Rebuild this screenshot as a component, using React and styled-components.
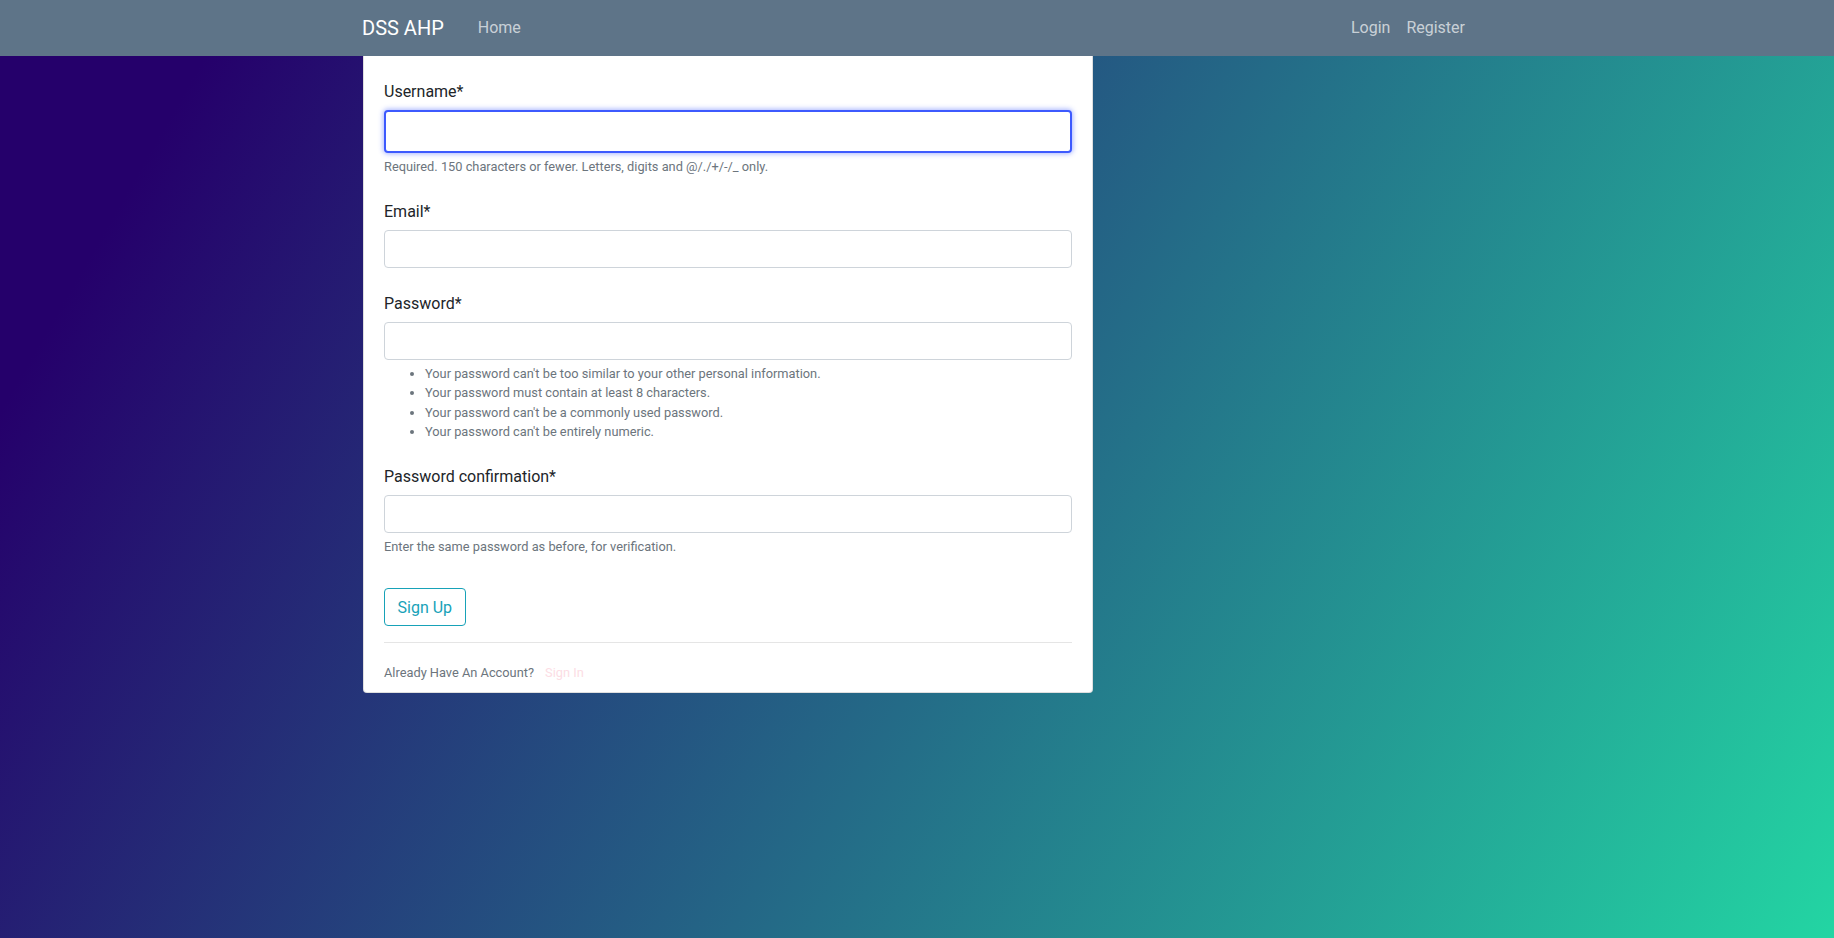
import styled, { createGlobalStyle } from "styled-components";

const GlobalStyle = createGlobalStyle`
    html, body {
        margin: 0;
        padding: 0;
    }

    body {
        min-height: 100vh;
        font-family: Roboto, "Liberation Sans", sans-serif;
        background: linear-gradient(120deg, #25006b 10%, #23d5a3 100%);
        background-attachment: fixed;
        color: #212529;
    }

    * {
        box-sizing: border-box;
    }
`;

const passwordRules = [
    "Your password can't be too similar to your other personal information.",
    "Your password must contain at least 8 characters.",
    "Your password can't be a commonly used password.",
    "Your password can't be entirely numeric.",
];

export default function App() {
    return (
        <>
            <GlobalStyle />
            <NavbarSC>
                <NavInnerSC>
                    <BrandSC href="#">DSS AHP</BrandSC>
                    <NavLinkSC href="#">Home</NavLinkSC>
                    <NavRightSC>
                        <NavLinkSC href="#">Login</NavLinkSC>
                        <NavLinkSC href="#" last>Register</NavLinkSC>
                    </NavRightSC>
                </NavInnerSC>
            </NavbarSC>

            <ContainerSC>
                <CardSC>
                    <form onSubmit={e => e.preventDefault()}>
                        <FormGroupSC>
                            <LabelSC htmlFor="id_username">Username*</LabelSC>
                            <InputSC id="id_username" type="text" focused />
                            <HelpSC>Required. 150 characters or fewer. Letters, digits and @/./+/-/_ only.</HelpSC>
                        </FormGroupSC>

                        <FormGroupSC>
                            <LabelSC htmlFor="id_email">Email*</LabelSC>
                            <InputSC id="id_email" type="email" />
                        </FormGroupSC>

                        <FormGroupSC>
                            <LabelSC htmlFor="id_password1">Password*</LabelSC>
                            <InputSC id="id_password1" type="password" />
                            <RulesSC>
                                {passwordRules.map((rule, i) => (
                                    <li key={i}>{rule}</li>
                                ))}
                            </RulesSC>
                        </FormGroupSC>

                        <FormGroupSC>
                            <LabelSC htmlFor="id_password2">Password confirmation*</LabelSC>
                            <InputSC id="id_password2" type="password" />
                            <HelpSC>Enter the same password as before, for verification.</HelpSC>
                        </FormGroupSC>

                        <SubmitSC type="submit">Sign Up</SubmitSC>
                    </form>

                    <DividerSC />

                    <FooterSC>
                        Already Have An Account? <SignInSC href="#">Sign In</SignInSC>
                    </FooterSC>
                </CardSC>
            </ContainerSC>
        </>
    );
}

const NavbarSC = styled.nav`
    height: 56px;
    background-color: #5e7488;
`;

const NavInnerSC = styled.div`
    width: 1110px;
    height: 100%;
    margin: 0 auto;
    display: flex;
    align-items: center;
`;

const BrandSC = styled.a`
    color: #fff;
    font-size: 20px;
    line-height: 30px;
    text-decoration: none;
    margin-right: 26px;
`;

const NavLinkSC = styled.a`
    color: rgba(255, 255, 255, 0.68);
    font-size: 16px;
    line-height: 24px;
    text-decoration: none;
    padding: 8px;
    padding-right: ${props => props.last ? '7px' : '8px'};
`;

const NavRightSC = styled.div`
    margin-left: auto;
    display: flex;
`;

const ContainerSC = styled.main`
    width: 1110px;
    margin: 0 auto;
    padding-left: 1px;
`;

const CardSC = styled.section`
    width: 730px;
    background-color: #fff;
    border: 1px solid rgba(0, 0, 0, 0.125);
    border-top: none;
    border-radius: 0 0 4px 4px;
    padding: 24px 20px 10px;
`;

const FormGroupSC = styled.div`
    margin-bottom: 24px;
`;

const LabelSC = styled.label`
    display: block;
    font-size: 16px;
    line-height: 24px;
    margin-bottom: 6px;
    color: #212529;
`;

const InputSC = styled.input`
    display: block;
    width: 100%;
    height: ${props => props.focused ? '43px' : '38px'};
    padding: 6px 12px;
    font-family: inherit;
    font-size: 16px;
    color: #495057;
    background-color: #fff;
    border: ${props => props.focused ? '2px solid #3d5afe' : '1px solid #ced4da'};
    border-radius: 4px;
    box-shadow: ${props => props.focused ? '0 0 5px 1px rgba(61, 90, 254, 0.45)' : 'none'};
    outline: none;
`;

const HelpSC = styled.small`
    display: block;
    margin-top: 4px;
    font-size: 12.8px;
    line-height: 19.2px;
    color: #6c757d;
`;

const RulesSC = styled.ul`
    margin: 4px 0 0;
    padding-left: 41px;
    font-size: 12.8px;
    line-height: 19.2px;
    color: #6c757d;
`;

const SubmitSC = styled.button`
    margin-top: 8px;
    height: 38px;
    padding: 0 12.5px;
    font-family: inherit;
    font-size: 16px;
    color: #17a2b8;
    background: transparent;
    border: 1px solid #17a2b8;
    border-radius: 4px;
    cursor: pointer;
`;

const DividerSC = styled.hr`
    margin: 16px 0 0;
    border: 0;
    border-top: 1px solid rgba(0, 0, 0, 0.1);
`;

const FooterSC = styled.div`
    margin-top: 20px;
    font-size: 12.8px;
    line-height: 19.2px;
    color: #6c757d;
`;

const SignInSC = styled.a`
    margin-left: 8px;
    color: #fcdde4;
    text-decoration: none;
`;
